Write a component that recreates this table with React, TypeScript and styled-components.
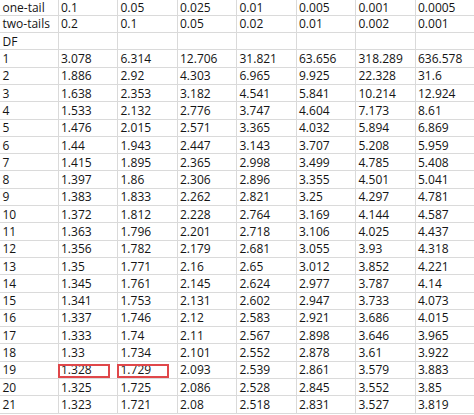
import React from "react";
import styled, { createGlobalStyle } from "styled-components";

// 页面基础样式
const GlobalStyle = createGlobalStyle`
  html, body {
    margin: 0;
    padding: 0;
    background: #fff;
  }
  body {
    font-family: "Open Sans", "Liberation Sans", sans-serif;
    color: #141414;
  }
`;

// 表格网格
const Sheet = styled.div`
  display: grid;
  grid-template-columns: 58.5px repeat(7, 59.5px);
  grid-template-rows: 15.8px repeat(23, 17.3px);
  width: 474px;
  height: 415px;
  overflow: hidden;
`;

// 单元格
const Cell = styled.div<{ $last: boolean }>`
  position: relative;
  display: flex;
  align-items: center;
  padding: 1px 0 0 2.5px;
  font-size: 12px;
  line-height: 1;
  white-space: nowrap;
  border-bottom: 1px solid #dadada;
  border-right: ${(p) => (p.$last ? "none" : "1px solid #dadada")};
  box-sizing: border-box;
`;

// 红色标注框
const Mark = styled.span`
  position: absolute;
  left: -1px;
  top: 2px;
  width: 52px;
  height: 14px;
  border: 2px solid #e0474a;
  box-sizing: border-box;
  pointer-events: none;
`;

const header = [
  ["one-tail", "0.1", "0.05", "0.025", "0.01", "0.005", "0.001", "0.0005"],
  ["two-tails", "0.2", "0.1", "0.05", "0.02", "0.01", "0.002", "0.001"],
  ["DF", "", "", "", "", "", "", ""],
];

const values: string[][] = [
  ["3.078", "6.314", "12.706", "31.821", "63.656", "318.289", "636.578"],
  ["1.886", "2.92", "4.303", "6.965", "9.925", "22.328", "31.6"],
  ["1.638", "2.353", "3.182", "4.541", "5.841", "10.214", "12.924"],
  ["1.533", "2.132", "2.776", "3.747", "4.604", "7.173", "8.61"],
  ["1.476", "2.015", "2.571", "3.365", "4.032", "5.894", "6.869"],
  ["1.44", "1.943", "2.447", "3.143", "3.707", "5.208", "5.959"],
  ["1.415", "1.895", "2.365", "2.998", "3.499", "4.785", "5.408"],
  ["1.397", "1.86", "2.306", "2.896", "3.355", "4.501", "5.041"],
  ["1.383", "1.833", "2.262", "2.821", "3.25", "4.297", "4.781"],
  ["1.372", "1.812", "2.228", "2.764", "3.169", "4.144", "4.587"],
  ["1.363", "1.796", "2.201", "2.718", "3.106", "4.025", "4.437"],
  ["1.356", "1.782", "2.179", "2.681", "3.055", "3.93", "4.318"],
  ["1.35", "1.771", "2.16", "2.65", "3.012", "3.852", "4.221"],
  ["1.345", "1.761", "2.145", "2.624", "2.977", "3.787", "4.14"],
  ["1.341", "1.753", "2.131", "2.602", "2.947", "3.733", "4.073"],
  ["1.337", "1.746", "2.12", "2.583", "2.921", "3.686", "4.015"],
  ["1.333", "1.74", "2.11", "2.567", "2.898", "3.646", "3.965"],
  ["1.33", "1.734", "2.101", "2.552", "2.878", "3.61", "3.922"],
  ["1.328", "1.729", "2.093", "2.539", "2.861", "3.579", "3.883"],
  ["1.325", "1.725", "2.086", "2.528", "2.845", "3.552", "3.85"],
  ["1.323", "1.721", "2.08", "2.518", "2.831", "3.527", "3.819"],
];

const rows = [
  ...header,
  ...values.map((v, i) => [String(i + 1), ...v]),
];

export default function App() {
  return (
    <>
      <GlobalStyle />
      <Sheet>
        {rows.map((row, r) =>
          row.map((text, c) => (
            <Cell key={`${r}-${c}`} $last={c === 7}>
              {text}
              {row[0] === "19" && (c === 1 || c === 2) && <Mark />}
            </Cell>
          ))
        )}
      </Sheet>
    </>
  );
}
